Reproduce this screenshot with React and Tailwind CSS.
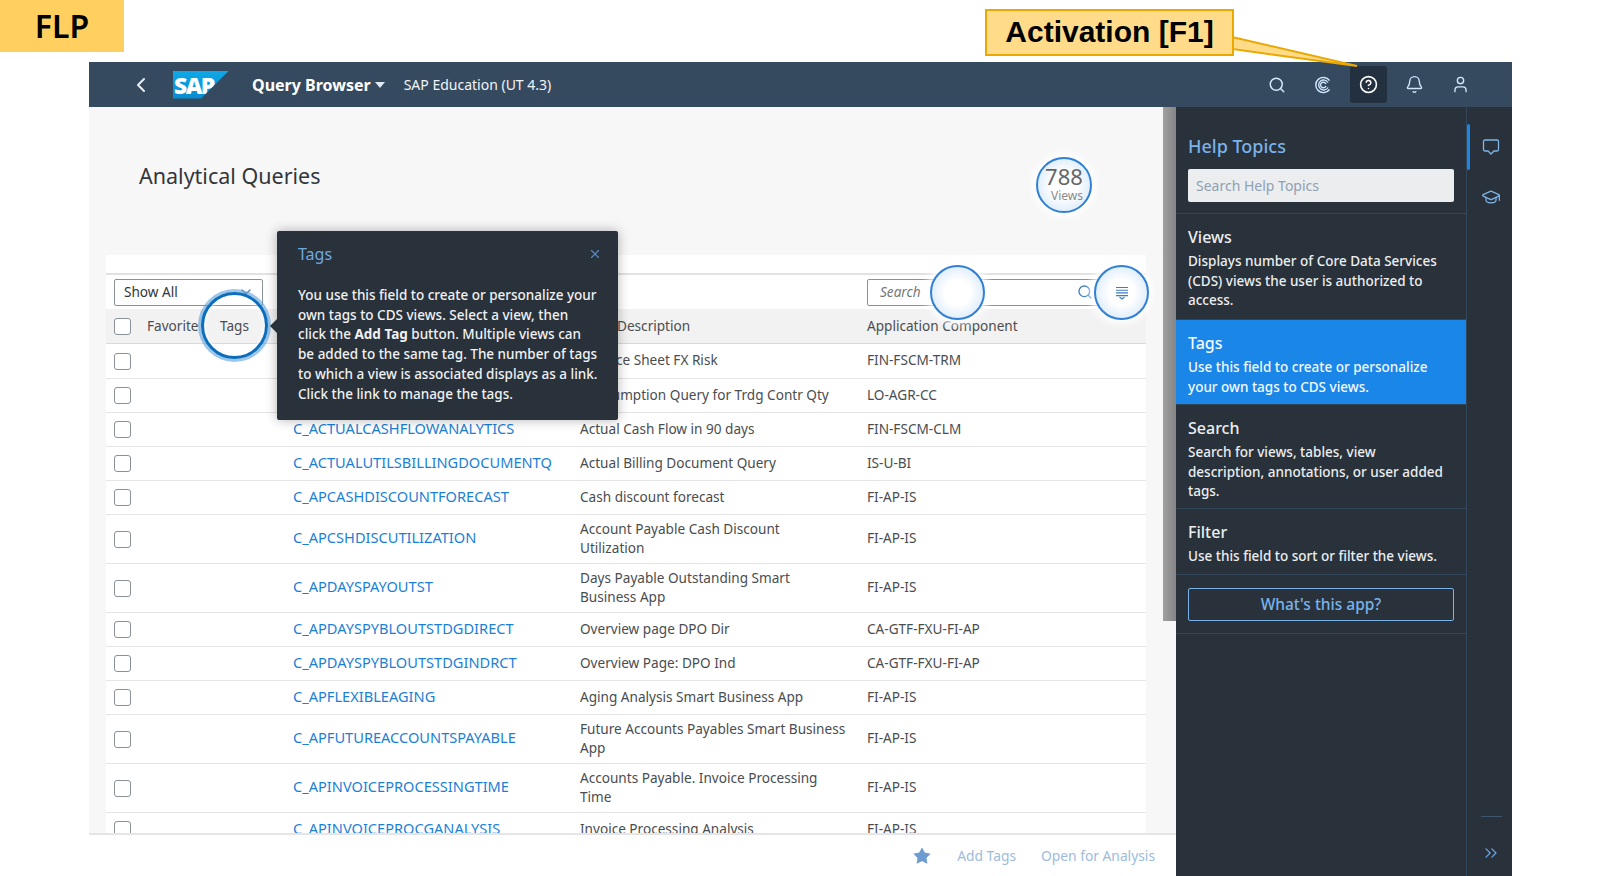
import { Bell, ChevronDown, ChevronLeft, ChevronsRight, CircleHelp, GraduationCap, Search, Star, User, X } from 'lucide-react';

const rows = [
    { name: 'C_ABALANCESHEETFXRISK', desc: 'Balance Sheet FX Risk', app: 'FIN-FSCM-TRM', first: true },
    { name: 'C_ACOMMODITYCONSUMPTION', desc: 'Consumption Query for Trdg Contr Qty', app: 'LO-AGR-CC' },
    { name: 'C_ACTUALCASHFLOWANALYTICS', desc: 'Actual Cash Flow in 90 days', app: 'FIN-FSCM-CLM' },
    { name: 'C_ACTUALUTILSBILLINGDOCUMENTQ', desc: 'Actual Billing Document Query', app: 'IS-U-BI' },
    { name: 'C_APCASHDISCOUNTFORECAST', desc: 'Cash discount forecast', app: 'FI-AP-IS' },
    { name: 'C_APCSHDISCUTILIZATION', desc: 'Account Payable Cash Discount\nUtilization', app: 'FI-AP-IS', tall: true },
    { name: 'C_APDAYSPAYOUTST', desc: 'Days Payable Outstanding Smart\nBusiness App', app: 'FI-AP-IS', tall: true },
    { name: 'C_APDAYSPYBLOUTSTDGDIRECT', desc: 'Overview page DPO Dir', app: 'CA-GTF-FXU-FI-AP' },
    { name: 'C_APDAYSPYBLOUTSTDGINDRCT', desc: 'Overview Page: DPO Ind', app: 'CA-GTF-FXU-FI-AP' },
    { name: 'C_APFLEXIBLEAGING', desc: 'Aging Analysis Smart Business App', app: 'FI-AP-IS' },
    { name: 'C_APFUTUREACCOUNTSPAYABLE', desc: 'Future Accounts Payables Smart Business\nApp', app: 'FI-AP-IS', tall: true },
    { name: 'C_APINVOICEPROCESSINGTIME', desc: 'Accounts Payable. Invoice Processing\nTime', app: 'FI-AP-IS', tall: true },
    { name: 'C_APINVOICEPROCGANALYSIS', desc: 'Invoice Processing Analysis', app: 'FI-AP-IS' },
];

const topics = [
    { title: 'Views', text: 'Displays number of Core Data Services\n(CDS) views the user is authorized to\naccess.', height: 'h-[106px]' },
    { title: 'Tags', text: 'Use this field to create or personalize\nyour own tags to CDS views.', height: 'h-[85px]', active: true },
    { title: 'Search', text: 'Search for views, tables, view\ndescription, annotations, or user added\ntags.', height: 'h-[104px]' },
    { title: 'Filter', text: 'Use this field to sort or filter the views.', height: 'h-[66px]' },
];

const bubble = 'bg-[radial-gradient(circle,#ffffff_35%,#e4f0fb_68%,#a9ccf2_100%)] border-2 border-[#2f80d6] rounded-full shadow-[0_0_6px_5px_rgba(255,255,255,0.75)]';

function Checkbox() {
    return <span className="block h-[17px] w-[17px] rounded-[3px] border border-[#89919a] bg-white" />;
}

function Table() {
    return (
        <div className="ml-[17px] flex w-[1040px] flex-1 flex-col overflow-hidden bg-white">
            <div className="h-[20px] shrink-0 border-b-2 border-[#e2e2e2]" />
            <div className="flex h-[34px] shrink-0 items-center justify-between pl-[8px] pr-[42px]">
                <div className="flex h-[27px] w-[149px] items-center justify-between rounded-[2px] border border-[#89919a] pl-[9px] pr-[8px] text-[13.6px] text-[#32363a]">
                    Show All
                    <ChevronDown size={16} className="text-[#5d7fa3]" />
                </div>
                <div className="flex h-[27px] w-[237px] items-center justify-between rounded-[2px] border border-[#89919a] pl-[12px] pr-[10px] text-[13.6px] italic text-[#74777a]">
                    Search
                    <Search size={16} className="text-[#3f7fbf]" />
                </div>
            </div>
            <div className="grid h-[35px] shrink-0 grid-cols-[41px_73px_73px_287px_287px_1fr] items-center border-b border-[#d9d9d9] bg-[#f2f2f2] text-[13.6px] text-[#4a4d50]">
                <span className="pl-[8px]"><Checkbox /></span>
                <span>Favorite</span>
                <span>Tags</span>
                <span>View</span>
                <span className="pl-[37px]">Description</span>
                <span>Application Component</span>
            </div>
            {rows.map((row) => (
                <div
                    key={row.name}
                    className={`grid shrink-0 grid-cols-[41px_73px_73px_287px_287px_1fr] items-center border-b border-[#e5e5e5] text-[13.6px] leading-[19.5px] text-[#4a4d50] ${row.tall ? 'h-[49px]' : row.first ? 'h-[35px]' : 'h-[34px]'}`}
                >
                    <span className="pl-[8px]"><Checkbox /></span>
                    <span />
                    <span />
                    <a className="pb-[2px] text-[14.6px] text-[#1b7fd6]">{row.name}</a>
                    <span className="whitespace-pre-line pb-[2px]">{row.desc}</span>
                    <span className="pb-[2px]">{row.app}</span>
                </div>
            ))}
        </div>
    );
}

function SidePanel() {
    return (
        <aside className="flex h-full w-[291px] shrink-0 flex-col border-r border-[#34465a] bg-[#29313a]">
            <div className="h-[107px] shrink-0 border-b border-[#34465a] px-[12px] pt-[25px]">
                <h2 className="text-[18px] font-medium leading-[28px] text-[#79b3ea]">Help Topics</h2>
                <div className="mt-[9px] flex h-[33px] w-[266px] items-center rounded-[2px] bg-[#ebedef] px-[8px] text-[14px] text-[#8fa0b2]">
                    Search Help Topics
                </div>
            </div>
            {topics.map((topic) => (
                <div
                    key={topic.title}
                    className={`shrink-0 border-b border-[#34465a] px-[12px] pt-[10px] ${topic.height} ${topic.active ? 'bg-[#1a86e8] text-[#f4f9ff]' : 'text-[#eceef0]'}`}
                >
                    <h3 className="text-[16px] font-medium leading-[26px]">{topic.title}</h3>
                    <p className="mt-[2px] whitespace-pre-line text-[13.5px] font-medium leading-[19.7px]">{topic.text}</p>
                </div>
            ))}
            <div className="shrink-0 border-b border-[#34465a] px-[12px] pb-[12px] pt-[13px]">
                <button className="h-[33px] w-[266px] rounded-[2px] border border-[#79b3ea] text-[15.5px] font-medium text-[#79b3ea]">What's this app?</button>
            </div>
        </aside>
    );
}

function Rail() {
    return (
        <div className="relative flex w-[45px] shrink-0 flex-col items-center bg-[#29313a] pl-[3px] pt-[30px] text-[#7fb5e8]">
            <span className="absolute left-0 top-[17px] h-[46px] w-[3px] rounded-[2px] bg-[#1a86e8]" />
            <svg width="20" height="20" viewBox="0 0 20 20" fill="none" stroke="currentColor" strokeWidth="1.3">
                <path d="M4 3h12a1.5 1.5 0 0 1 1.5 1.5v8A1.5 1.5 0 0 1 16 14h-3l-3 3-3-3H4a1.5 1.5 0 0 1-1.5-1.5v-8A1.5 1.5 0 0 1 4 3z" />
            </svg>
            <GraduationCap size={20} strokeWidth={1.5} className="mt-[30px]" />
            <span className="mt-auto h-px w-[21px] bg-[#3d5670]" />
            <ChevronsRight size={20} strokeWidth={1.5} className="mb-[13px] mt-[26px] text-[#6aa5e6]" />
        </div>
    );
}

function HeaderBar() {
    const icons = [
        <Search key="search" size={18} strokeWidth={2} />,
        <svg key="cite" width="18" height="18" viewBox="0 0 18 18" fill="none" stroke="currentColor" strokeWidth="1.4">
            <path d="M15.5 4.5A7.6 7.6 0 1 0 15.5 13.5" />
            <path d="M14 6.5A5 5 0 1 0 14 11.5" />
            <path d="M12 8A2.8 2.8 0 1 0 12 10" />
        </svg>,
        <CircleHelp key="help" size={19} strokeWidth={2} className="text-white" />,
        <Bell key="bell" size={19} strokeWidth={1.7} />,
        <User key="user" size={19} strokeWidth={1.7} />,
    ];
    return (
        <header className="flex h-[45px] shrink-0 items-center bg-[#354a5f] text-white">
            <ChevronLeft size={24} strokeWidth={2} className="ml-[40px] text-[#e8eef5]" />
            <div className="ml-[20px] h-[28px] w-[56px] bg-gradient-to-b from-[#10a8e8] to-[#0a8bd0] pl-[1px] text-[23px] font-black leading-[29px] tracking-[-1.6px] [clip-path:polygon(0_0,100%_0,50%_100%,0_100%)]">
                SAP
            </div>
            <span className="ml-[23px] text-[16px] font-bold">Query Browser</span>
            <span className="ml-[4px] h-0 w-0 border-x-[5px] border-t-[6px] border-x-transparent border-t-[#dfe9f3]" />
            <span className="ml-[19px] text-[14px] text-[#f2f5f8]">SAP Education (UT 4.3)</span>
            <div className="ml-auto mr-[33px] flex items-center gap-[9px] text-[#d1e8ff]">
                {icons.map((icon, i) => (
                    <span key={i} className={`grid h-[37px] w-[37px] place-items-center rounded-[3px] ${i === 2 ? 'bg-[#22303f]' : ''}`}>{icon}</span>
                ))}
            </div>
        </header>
    );
}

export default function App() {
    return (
        <div className="relative flex h-[876px] w-[1600px] flex-col overflow-hidden bg-white font-['Noto_Sans',sans-serif]">
            <div className="flex h-[62px] shrink-0 items-start">
                <div className="flex h-[52px] w-[124px] items-center justify-center bg-[#ffd05f] text-[32px] font-semibold text-black">FLP</div>
                <div className="relative z-20 ml-[861px] mt-[9px] flex h-[47px] w-[249px] items-center justify-center border-2 border-[#eaa800] bg-[#ffdb8a] pb-[2px] font-['Liberation_Sans',sans-serif] text-[30px] font-bold text-black">
                    Activation [F1]
                </div>
            </div>

            <svg className="absolute left-[1230px] top-[30px] z-10" width="132" height="42" viewBox="0 0 132 42">
                <polygon points="2,7 127,36 2,19" fill="#ffdb8a" stroke="#eaa800" strokeWidth="2" />
            </svg>

            <div className="ml-[89px] flex h-[814px] w-[1423px] flex-col">
                <HeaderBar />
                <div className="flex min-h-0 flex-1">
                    <div className="flex w-[1087px] shrink-0 flex-col">
                        <div className="flex min-h-0 flex-1 bg-[#f7f7f7]">
                            <main className="flex w-[1074px] shrink-0 flex-col">
                                <div className="h-[148px] shrink-0 pl-[50px] pt-[51px] text-[21.5px] leading-[36px] text-[#32363a]">Analytical Queries</div>
                                <Table />
                            </main>
                            <div className="h-[514px] w-[13px] bg-gradient-to-r from-[#a0a0a0] to-[#858585]" />
                        </div>
                        <footer className="flex h-[43px] shrink-0 items-center justify-end gap-[25px] border-t-2 border-[#e5e5e5] bg-white pr-[21px] pt-[1px] text-[13.8px] text-[#9dbbdc]">
                            <Star size={20} fill="#6f9cd0" strokeWidth={0} />
                            <span>Add Tags</span>
                            <span>Open for Analysis</span>
                        </footer>
                    </div>
                    <SidePanel />
                    <Rail />
                </div>
            </div>

            {/* callouts laid over the app */}
            <div className={`absolute left-[1036px] top-[157px] flex h-[56px] w-[56px] flex-col items-center pt-[4px] text-[#666] ${bubble}`}>
                <span className="text-[22px] leading-[26px]">788</span>
                <span className="ml-[6px] text-[12px] leading-[14px] text-[#888]">Views</span>
            </div>
            <div className="absolute left-[201px] top-[292px] h-[67px] w-[67px] rounded-full border-[3px] border-[#0a6ebd] shadow-[0_0_0_3px_rgba(90,160,220,0.6),inset_0_0_6px_rgba(255,255,255,0.8)]" />
            <div className={`absolute left-[930px] top-[265px] h-[55px] w-[55px] ${bubble}`} />
            <div className={`absolute left-[1094px] top-[265px] grid h-[55px] w-[55px] place-items-center ${bubble}`}>
                <svg width="14" height="14" viewBox="0 0 14 14" fill="none" stroke="#3f7fbf" strokeWidth="1.1">
                    <path d="M1 1.5h12M1 4.2h12M1 6.9h12M1 9.6h12" />
                    <path d="M4.5 11l2.5 2 2.5-2" />
                </svg>
            </div>

            <div className="absolute left-[277px] top-[231px] z-10 h-[189px] w-[341px] rounded-[2px] bg-[#29313a] pl-[21px] pt-[10px] text-[#f0f2f4] shadow-[0_0_12px_rgba(0,0,0,0.3)]">
                <span className="absolute left-[-7px] top-[88px] h-0 w-0 border-y-[7px] border-r-[7px] border-y-transparent border-r-[#29313a]" />
                <X size={14} strokeWidth={2} className="absolute right-[16px] top-[16px] text-[#5a8fc4]" />
                <h4 className="text-[16px] leading-[26px] text-[#6fa8e0]">Tags</h4>
                <p className="mt-[19px] whitespace-nowrap text-[13.5px] font-medium leading-[19.7px]">
                    You use this field to create or personalize your<br />
                    own tags to CDS views. Select a view, then<br />
                    click the <b>Add Tag</b> button. Multiple views can<br />
                    be added to the same tag. The number of tags<br />
                    to which a view is associated displays as a link.<br />
                    Click the link to manage the tags.
                </p>
            </div>
        </div>
    );
}
